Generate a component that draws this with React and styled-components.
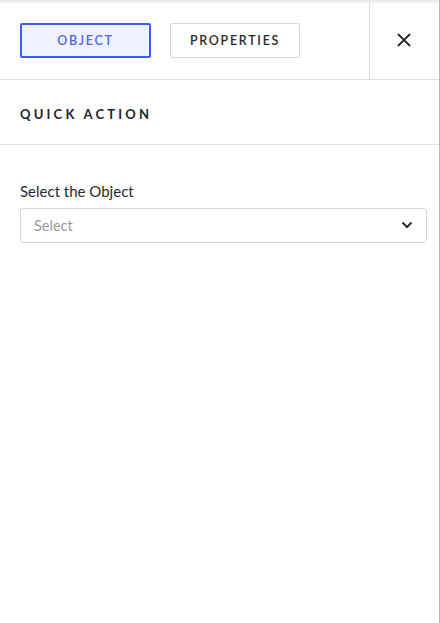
import React from "react";
import styled, { createGlobalStyle } from "styled-components";

const Global = createGlobalStyle`
  html, body { margin: 0; padding: 0; background: #fff; }
  body { font-family: Lato, "Noto Sans", sans-serif; }
  * { box-sizing: border-box; }
`;

const Panel = styled.div`
  width: 440px;
  height: 623px;
  background: #fff;
  border-right: 1px solid #b4bcc4;
  position: relative;
  display: flex;
  flex-direction: column;
  &::before {
    content: "";
    position: absolute;
    left: 0; right: 0; top: 0;
    height: 4px;
    background: linear-gradient(#e6e6ea, rgba(255,255,255,0));
    pointer-events: none;
  }
`;

const Header = styled.div`
  display: flex;
  height: 80px;
  border-bottom: 1px solid #dcdce4;
`;

const Tabs = styled.div`
  flex: 1;
  display: flex;
  align-items: center;
  gap: 19px;
  padding: 2px 0 0 20px;
`;

const Tab = styled.button`
  width: ${p => (p.$active ? "131px" : "130px")};
  height: 35px;
  margin: 0;
  padding: 0;
  font-family: Lato, "Noto Sans", sans-serif;
  font-size: 12.5px;
  font-weight: 600;
  letter-spacing: 1.7px;
  border-radius: 2px;
  cursor: pointer;
  color: ${p => (p.$active ? "#5064f0" : "#2e2a2a")};
  background: ${p => (p.$active ? "#eef1ff" : "#fff")};
  border: ${p => (p.$active ? "2px solid #3d5afe" : "1px solid #d8d8e0")};
`;

const CloseCell = styled.div`
  width: 70px;
  margin-top: 3px;
  border-left: 1px solid #d8d8e0;
  display: flex;
  align-items: center;
  justify-content: center;
  padding-bottom: 2px;
  padding-right: 1px;
`;

const Section = styled.div`
  height: 65px;
  border-bottom: 1px solid #e2e2ea;
  display: flex;
  align-items: center;
  padding: 3px 20px 0;
  font-size: 13px;
  font-weight: 700;
  letter-spacing: 3.2px;
  color: #23232b;
`;

const Body = styled.div`
  padding: 37px 12px 0 20px;
  display: flex;
  flex-direction: column;
  gap: 8px;
`;

const Label = styled.div`
  font-size: 15px;
  color: #2a2a30;
  line-height: 18px;
`;

const SelectBox = styled.div`
  height: 35px;
  border: 1px solid #d6d6e0;
  border-radius: 3px;
  display: flex;
  align-items: center;
  justify-content: space-between;
  padding: 0 13px 1px;
  font-size: 14.5px;
  color: #9a9aa6;
`;

export default function App() {
  return (
    <>
      <Global />
      <Panel>
        <Header>
          <Tabs>
            <Tab $active>OBJECT</Tab>
            <Tab>PROPERTIES</Tab>
          </Tabs>
          <CloseCell>
            <svg width="16" height="16" viewBox="0 0 16 16">
              <path d="M2 2 L14 14 M14 2 L2 14" stroke="#2a2a32" strokeWidth="1.8" fill="none" />
            </svg>
          </CloseCell>
        </Header>
        <Section>QUICK ACTION</Section>
        <Body>
          <Label>Select the Object</Label>
          <SelectBox>
            <span>Select</span>
            <svg width="12" height="8" viewBox="0 0 12 8">
              <path d="M1.5 1.5 L6 6 L10.5 1.5" stroke="#2a2a32" strokeWidth="2" fill="none" />
            </svg>
          </SelectBox>
        </Body>
      </Panel>
    </>
  );
}
